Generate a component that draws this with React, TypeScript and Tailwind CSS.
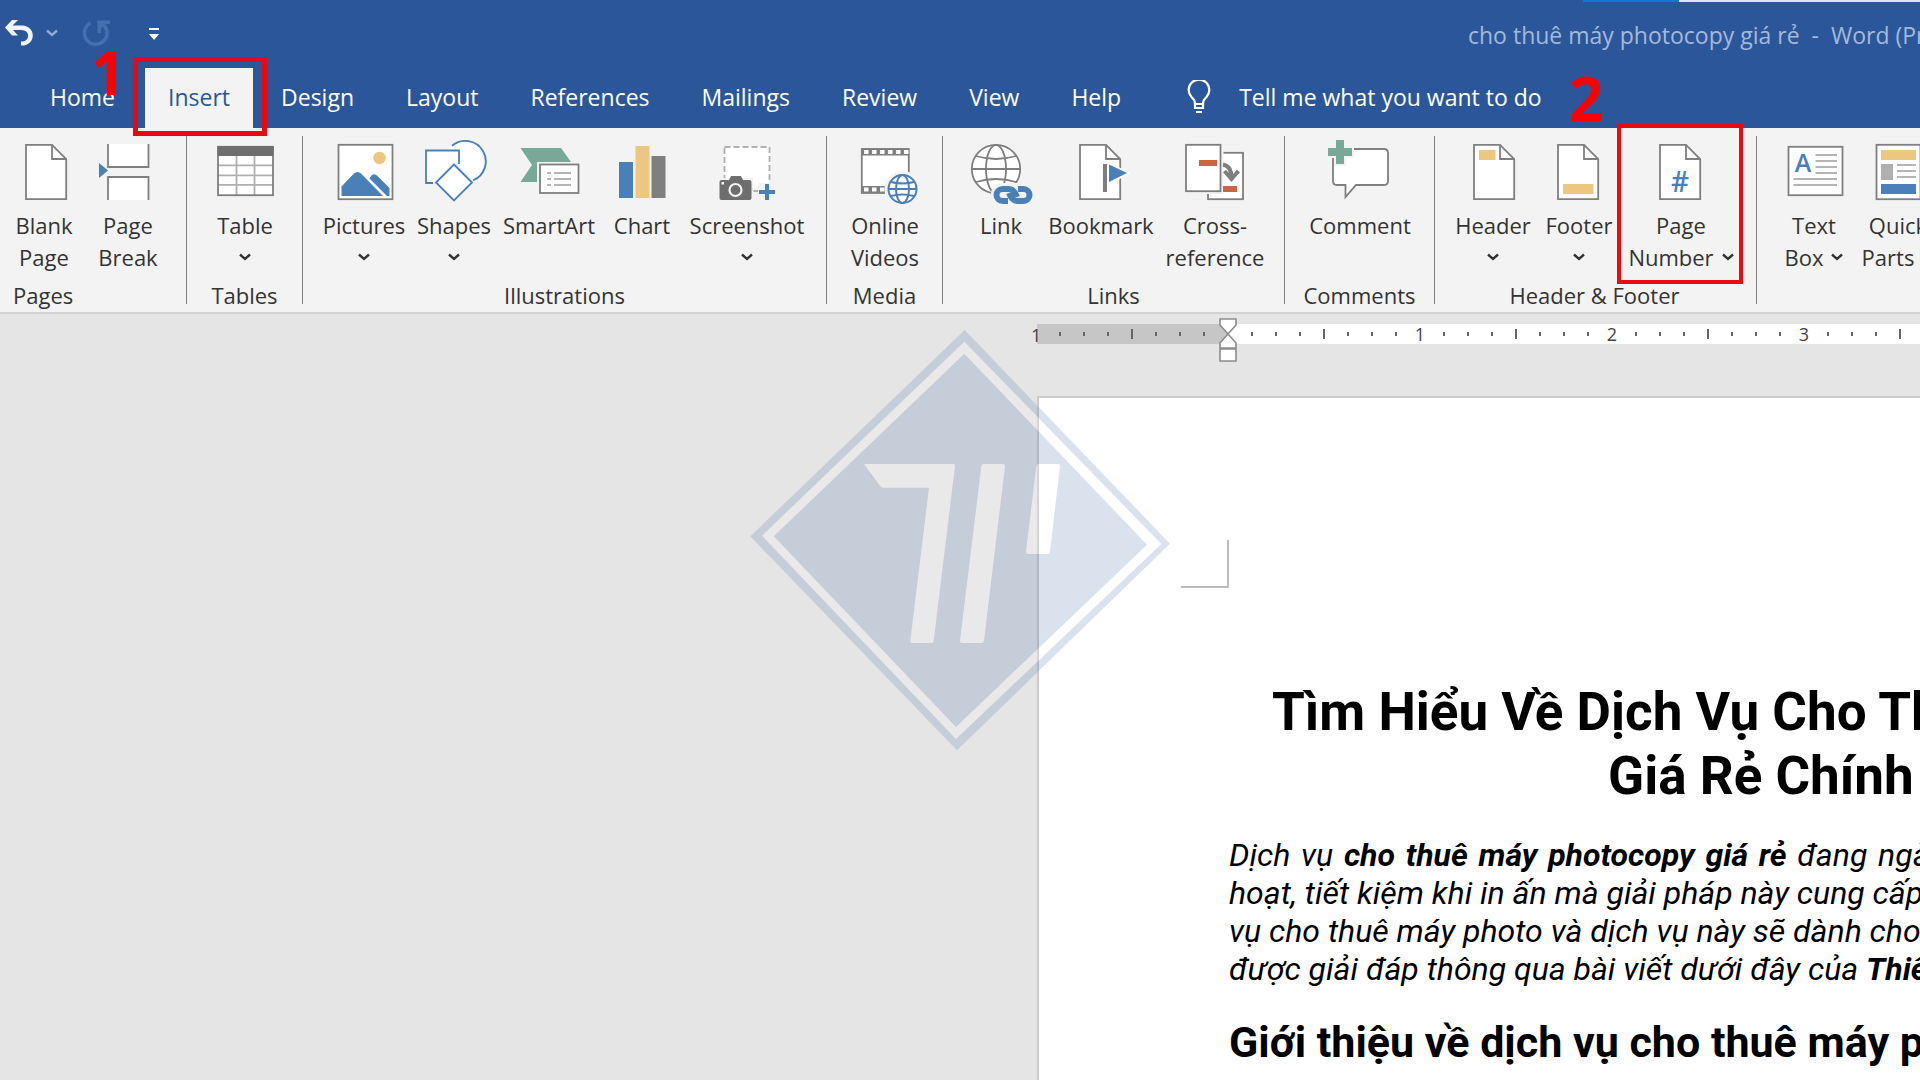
import type { ReactNode } from "react";

interface Tool {
  lines: string[];
  icon: ReactNode;
  width: string;
  menu?: "below" | "inline";
  marked?: boolean;
}

interface Group {
  name: string;
  className: string;
  labelClass?: string;
  tools: Tool[];
}

const GREY = "#7f7f7f";
const BLUE = "#4a80b8";
const GREEN = "#78a897";
const SAND = "#ecc77f";
const RED = "#cf6347";

function Icon({ children }: { children: ReactNode }) {
  return (
    <svg width="72" height="68" viewBox="0 0 72 68" fill="none" aria-hidden="true">
      {children}
    </svg>
  );
}

function Sheet({ x }: { x: number }) {
  return (
    <g transform={`translate(${x} 0)`} stroke={GREY} strokeWidth="1.8">
      <path d="M1 4.8H27L41.2 19V59.2H1Z" fill="#fff" />
      <path d="M27 4.8V19H41.2" />
    </g>
  );
}

const icons = {
  blank: <Icon><Sheet x={17} /></Icon>,
  pageBreak: (
    <Icon>
      <path d="M16 4V27H56.5V4M16 60V37H56.5V60" fill="#fff" stroke={GREY} strokeWidth="1.8" />
      <path d="M7 23L16 30.5L7 38Z" fill={BLUE} />
    </Icon>
  ),
  table: (
    <Icon>
      <rect x="9" y="6.8" width="55" height="48.4" fill="#fff" />
      <path d="M9 25.3H64M9 35.3H64M9 44.8H64M27.5 16V55M45.5 16V55" stroke="#b0b0b0" strokeWidth="1.8" />
      <rect x="9" y="6.8" width="55" height="48.4" stroke={GREY} strokeWidth="1.8" />
      <rect x="8.5" y="6" width="56" height="10" fill="#6e6e6e" />
    </Icon>
  ),
  pictures: (
    <Icon>
      <rect x="10.5" y="4.8" width="54" height="54.4" fill="#fff" stroke={GREY} strokeWidth="1.8" />
      <circle cx="51.5" cy="18" r="6.2" fill={SAND} />
      <path d="M13.5 56V46.5L26 33.5Q29.5 30.5 33 33.5L55 56Z" fill={BLUE} />
      <path d="M41.5 38.5Q45 31.5 49.5 36L61.5 48V56H59Z" fill={BLUE} />
    </Icon>
  ),
  shapes: (
    <Icon>
      <circle cx="45" cy="22.5" r="20.5" fill="#fff" />
      <rect x="8" y="10.5" width="33" height="32.5" fill="#fff" />
      <path d="M34 5.8A20.5 20.5 0 1 1 55 40.4M15 43H8V10.5H41V24" stroke={BLUE} strokeWidth="1.8" />
      <path d="M36 21L57 42.5L36 64L15 42.5Z" fill="#f3f3f3" />
      <path d="M36 24.5L54 42.5L36 60.5L18 42.5Z" fill="#fff" stroke={BLUE} strokeWidth="1.8" />
    </Icon>
  ),
  smartArt: (
    <Icon>
      <path d="M7.5 8H48L58 22H24V42H7.5L19 25Z" fill={GREEN} />
      <rect x="24.5" y="22" width="43" height="33" fill="#f3f3f3" />
      <rect x="27" y="24.5" width="38.5" height="28.5" fill="#fff" stroke={GREY} strokeWidth="1.8" />
      <path d="M34 33H38M34 39H38M34 45H38M41 33H58M41 39H58M41 45H58" stroke="#b5b5b5" strokeWidth="2" />
    </Icon>
  ),
  chart: (
    <Icon>
      <rect x="13" y="22" width="14" height="36" fill={BLUE} />
      <rect x="29.5" y="6" width="14" height="52" fill={SAND} />
      <rect x="45.5" y="16" width="14" height="42" fill="#7f7f7f" />
    </Icon>
  ),
  screenshot: (
    <Icon>
      <rect x="13.5" y="7" width="45" height="44" fill="#fff" stroke="#b0b0b0" strokeWidth="1.8" strokeDasharray="6 3" />
      <rect x="7" y="38" width="35" height="24" fill="#f3f3f3" />
      <path d="M10.5 40H18L20 36H30L32 40H38.5Q40.5 40 40.5 42V58Q40.5 60 38.5 60H10.5Q8.5 60 8.5 58V42Q8.5 40 10.5 40Z" fill="#6e6e6e" />
      <circle cx="24.5" cy="50" r="6" stroke="#f3f3f3" strokeWidth="2.2" />
      <rect x="10.5" y="42" width="2.5" height="2.5" fill="#f3f3f3" />
      <rect x="47" y="43" width="20" height="18" fill="#f3f3f3" />
      <path d="M43 51H47" stroke="#b0b0b0" strokeWidth="1.8" />
      <path d="M56 44V60M48 52H64" stroke={BLUE} strokeWidth="4" />
    </Icon>
  ),
  videos: (
    <Icon>
      <rect x="12.8" y="9" width="47" height="44" fill="#fff" stroke={GREY} strokeWidth="1.8" />
      <path d="M13 12H60M13 49.5H36" stroke={GREY} strokeWidth="7" />
      <path d="M15 12H60M15 49.5H36" stroke="#fff" strokeWidth="4" strokeDasharray="4.5 3.5" />
      <circle cx="53.5" cy="49" r="18" fill="#f3f3f3" />
      <g stroke={BLUE} strokeWidth="2">
        <circle cx="53.5" cy="49" r="14" fill="#fff" />
        <ellipse cx="53.5" cy="49" rx="6.5" ry="14" />
        <path d="M39.5 49H67.5M42 42Q53.5 45 65 42M42 56Q53.5 53 65 56" />
      </g>
    </Icon>
  ),
  link: (
    <Icon>
      <g stroke={GREY} strokeWidth="1.8">
        <circle cx="31" cy="29" r="24.2" fill="#fff" />
        <ellipse cx="31" cy="29" rx="10" ry="24.2" />
        <path d="M7 29H55M11 16Q31 22 51 16M11 42Q31 36 51 42" />
      </g>
      <rect x="26" y="43" width="46" height="23" rx="11" fill="#f3f3f3" />
      <g stroke={BLUE} strokeWidth="6">
        <path d="M43 61H37.5A6 6 0 0 1 37.5 49H44Q49 49 52 57" />
        <path d="M53 49H58.5A6 6 0 0 1 58.5 61H52Q47 61 44 53" />
      </g>
    </Icon>
  ),
  bookmark: (
    <Icon>
      <Sheet x={14} />
      <path d="M43 22L66 33L43 45Z" fill="#fff" />
      <rect x="38" y="24" width="4" height="28" fill={GREY} />
      <path d="M44 24.5L62 33L44 42Z" fill={BLUE} />
    </Icon>
  ),
  crossReference: (
    <Icon>
      <rect x="29" y="12.8" width="35" height="46.4" fill="#fff" stroke={GREY} strokeWidth="1.8" />
      <rect x="5" y="3" width="39.5" height="51" fill="#f3f3f3" />
      <rect x="7" y="4.8" width="34.5" height="46.4" fill="#fff" stroke={GREY} strokeWidth="1.8" />
      <path d="M20 23H38M44 49H58" stroke={RED} strokeWidth="6" />
      <path d="M44 24.5Q52.5 26 52.5 38M45.5 31L52.5 39L59.5 31" stroke={GREY} strokeWidth="4" />
    </Icon>
  ),
  comment: (
    <Icon>
      <path d="M13 9H60Q64 9 64 13V41Q64 45 60 45H32L21.5 57V45H13Q9 45 9 41V13Q9 9 13 9Z" fill="#fff" stroke={GREY} strokeWidth="1.8" />
      <path d="M16 -2V26M2 12H30" stroke="#f3f3f3" strokeWidth="12" />
      <path d="M16 0V24M4 12H28" stroke={GREEN} strokeWidth="8" />
    </Icon>
  ),
  header: (
    <Icon>
      <Sheet x={16} />
      <rect x="22" y="10" width="16.5" height="10" fill={SAND} />
    </Icon>
  ),
  footer: (
    <Icon>
      <Sheet x={14} />
      <rect x="20" y="44" width="30.5" height="10" fill={SAND} />
    </Icon>
  ),
  pageNumber: (
    <Icon>
      <Sheet x={14} />
      <text x="35" y="52" textAnchor="middle" fontSize="28" fontWeight="600" fill={BLUE}>#</text>
    </Icon>
  ),
  textBox: (
    <Icon>
      <rect x="10.5" y="6.8" width="54" height="48.4" fill="#fff" stroke={GREY} strokeWidth="1.8" />
      <text x="25" y="32" textAnchor="middle" fontSize="25" fontWeight="600" fill={BLUE}>A</text>
      <path d="M37.5 15H59M37.5 21H59M37.5 27H59M37.5 33H59M15.5 39H59M15.5 45H59" stroke="#b5b5b5" strokeWidth="2" />
    </Icon>
  ),
  quickParts: (
    <Icon>
      <rect x="14.5" y="4.8" width="44" height="54.4" fill="#fff" stroke={GREY} strokeWidth="1.8" />
      <rect x="19" y="10" width="35" height="10" fill={SAND} />
      <rect x="19" y="24" width="12" height="16" fill="#b0b0b0" />
      <path d="M35 25H54M35 31H54M35 37H54" stroke="#b5b5b5" strokeWidth="2" />
      <rect x="19" y="44" width="35" height="10" fill={BLUE} />
    </Icon>
  ),
};

const groups: Group[] = [
  {
    name: "Pages",
    className: "w-[187px] pl-0.5",
    labelClass: "pl-[11px] text-left",
    tools: [
      { lines: ["Blank", "Page"], icon: icons.blank, width: "w-[84px]" },
      { lines: ["Page", "Break"], icon: icons.pageBreak, width: "w-[84px]" },
    ],
  },
  {
    name: "Tables",
    className: "w-[116px]",
    tools: [{ lines: ["Table"], icon: icons.table, width: "w-[116px]", menu: "below" }],
  },
  {
    name: "Illustrations",
    className: "w-[524px] px-4",
    tools: [
      { lines: ["Pictures"], icon: icons.pictures, width: "w-[90px]", menu: "below" },
      { lines: ["Shapes"], icon: icons.shapes, width: "w-[90px]", menu: "below" },
      { lines: ["SmartArt"], icon: icons.smartArt, width: "w-[100px]" },
      { lines: ["Chart"], icon: icons.chart, width: "w-[86px]" },
      { lines: ["Screenshot"], icon: icons.screenshot, width: "w-[124px]", menu: "below" },
    ],
  },
  {
    name: "Media",
    className: "w-[116px]",
    tools: [{ lines: ["Online", "Videos"], icon: icons.videos, width: "w-[116px]" }],
  },
  {
    name: "Links",
    className: "w-[342px] px-[18px]",
    tools: [
      { lines: ["Link"], icon: icons.link, width: "w-[80px]" },
      { lines: ["Bookmark"], icon: icons.bookmark, width: "w-[120px]" },
      { lines: ["Cross-", "reference"], icon: icons.crossReference, width: "w-[108px]" },
    ],
  },
  {
    name: "Comments",
    className: "w-[150px]",
    tools: [{ lines: ["Comment"], icon: icons.comment, width: "w-[150px]" }],
  },
  {
    name: "Header & Footer",
    className: "w-[322px] pl-3.5 pr-4",
    tools: [
      { lines: ["Header"], icon: icons.header, width: "w-[88px]", menu: "below" },
      { lines: ["Footer"], icon: icons.footer, width: "w-[84px]", menu: "below" },
      { lines: ["Page", "Number"], icon: icons.pageNumber, width: "w-[120px]", menu: "inline", marked: true },
    ],
  },
  {
    name: "",
    className: "w-[322px] pl-3.5",
    tools: [
      { lines: ["Text", "Box"], icon: icons.textBox, width: "w-[86px]", menu: "inline" },
      { lines: ["Quick", "Parts"], icon: icons.quickParts, width: "w-[82px]", menu: "inline" },
    ],
  },
];

const tabs = ["Home", "Insert", "Design", "Layout", "References", "Mailings", "Review", "View", "Help"];

function Chevron() {
  return (
    <svg width="12" height="8" viewBox="0 0 12 8" fill="none" aria-hidden="true">
      <path d="M1 1.5L6 6L11 1.5" stroke="currentColor" strokeWidth="2.4" />
    </svg>
  );
}

function TitleBar() {
  return (
    <div className="relative flex h-[68px] items-start pt-[18px]">
      <div className="absolute top-0 right-0 left-[1583px] flex h-0.5">
        <div className="w-24 bg-[#0f78d4]" />
        <div className="flex-1 bg-[#dfe6f1]" />
      </div>
      <button type="button" aria-label="Undo" className="ml-1 text-[#f0f4fa]">
        <svg width="30" height="30" viewBox="0 0 30 30" fill="none">
          <path d="M1 9.5L8 2H14L8.5 7.5H18C33 8 32 28 17 27.5V23.5C26 24 27 12 17 12H9L14 17.5H8Z" fill="currentColor" />
        </svg>
      </button>
      <button type="button" aria-label="Undo history" className="mt-[11px] ml-3 text-[#8fa9d0]"><Chevron /></button>
      <button type="button" aria-label="Repeat" className="ml-[23px] text-[#4470ae]">
        <svg width="30" height="30" viewBox="0 0 30 30" fill="none">
          <path d="M9.5 5A11.3 11.3 0 1 0 21.500 6" stroke="currentColor" strokeWidth="3.5" />
          <path d="M16.500 2.500H29V6H24.500L20 10.500V15H16.500Z" fill="currentColor" />
        </svg>
      </button>
      <button type="button" aria-label="Customize Quick Access Toolbar" className="mt-2.5 ml-[37px] text-white">
        <svg width="12" height="14" viewBox="0 0 12 14" fill="currentColor">
          <path d="M1 0H11V2H1ZM1 6H11L6 12Z" />
        </svg>
      </button>
      <p className="absolute top-[19px] left-[1468px] text-[23px] leading-8 whitespace-pre text-[#a3b9da]">
        {"cho thuê máy photocopy giá rẻ  -  Word (Product Activation Failed)"}
      </p>
    </div>
  );
}

function TabStrip() {
  return (
    <div className="flex h-[60px] pl-6 text-[23px] leading-[58px] text-white">
      {tabs.map((tab) =>
        tab === "Insert" ? (
          <div key={tab} className="relative pr-0.5 pl-1">
            <button type="button" className="h-[60px] bg-[#f3f3f3] px-[23px] pb-0.5 text-[#2b579a]">{tab}</button>
            <span className="pointer-events-none absolute -top-[11px] -right-3 -bottom-2 -left-2 z-10 border-5 border-[#ea0a0d]" />
            <span className="pointer-events-none absolute -top-9 -left-[50px] z-10 text-[60px] leading-[80px] font-bold text-[#ff0000]">1</span>
          </div>
        ) : (
          <button key={tab} type="button" className="px-[26px] pb-0.5">{tab}</button>
        )
      )}
      <button type="button" className="ml-10 flex items-center gap-7 pb-0.5">
        <svg width="24" height="34" viewBox="0 0 24 34" fill="none" aria-hidden="true">
          <path d="M8 24Q8 20 4.5 17A10.3 10.3 0 1 1 19.5 17Q16 20 16 24V28H8ZM8 24H16M9 32H15" stroke="currentColor" strokeWidth="2.2" />
        </svg>
        Tell me what you want to do
      </button>
    </div>
  );
}

function ToolButton({ tool }: { tool: Tool }) {
  return (
    <button type="button" className={`relative flex shrink-0 flex-col items-center ${tool.width}`}>
      <span className="h-[69px] w-[72px]">{tool.icon}</span>
      {tool.lines.map((line, i) => (
        <span key={line} className="flex items-center gap-2 whitespace-nowrap">
          {line}
          {tool.menu === "inline" && i === tool.lines.length - 1 && <Chevron />}
        </span>
      ))}
      {tool.menu === "below" && <span className="flex h-8 items-center"><Chevron /></span>}
      {tool.marked && (
        <>
          <span className="pointer-events-none absolute -top-4 -right-0.5 -bottom-[11px] -left-1 border-4 border-[#ea0a0d]" />
          <span className="pointer-events-none absolute -top-[82px] -left-[52px] text-[60px] leading-[80px] font-bold text-[#ff0000]">2</span>
        </>
      )}
    </button>
  );
}

function Ribbon() {
  return (
    <div className="flex h-[186px] border-b-2 border-[#d2d2d2] bg-[#f3f3f3] pt-2 text-[22px] leading-8 text-[#333]">
      {groups.map((group, i) => (
        <section
          key={group.name || i}
          className={`flex h-[168px] shrink-0 flex-col justify-between border-r border-[#808080] pt-1 ${group.className}`}
        >
          <div className="flex items-start">
            {group.tools.map((tool) => <ToolButton key={tool.lines.join(" ")} tool={tool} />)}
          </div>
          <p className={`leading-[18px] ${group.labelClass ?? "text-center"}`}>{group.name}</p>
        </section>
      ))}
    </div>
  );
}

function Marks({ count }: { count: number }) {
  return (
    <>
      {Array.from({ length: count }, (_, i) => i + 1).map((n) => (
        <span key={n} className="flex w-6 shrink-0 items-center justify-center">
          {n % 8 === 0 ? n / 8 : n % 4 === 0
            ? <span className="h-2.5 w-0.5 bg-[#666]" />
            : <span className="h-1 w-0.5 bg-[#666]" />}
        </span>
      ))}
    </>
  );
}

function Ruler() {
  return (
    <div className="flex pt-2.5 pl-[1037px] text-[18px] leading-[22px] text-[#444]">
      <div className="relative flex h-5 w-[191px] shrink-0 bg-[#c6c6c6] pl-[11px]">
        <span className="absolute top-0 -left-1.5">1</span>
        <Marks count={7} />
        <svg className="absolute -top-1.5 -right-[9px] z-10" width="18" height="44" viewBox="0 0 18 44" fill="#fff" stroke="#8c8c8c" strokeWidth="1.6" aria-hidden="true">
          <path d="M1 1H17V7L9 16L17 25V30H1V25L9 16L1 7Z" />
          <path d="M1 31H17V43H1Z" />
        </svg>
      </div>
      <div className="flex h-5 min-w-0 flex-1 overflow-hidden bg-white pl-3">
        <Marks count={32} />
      </div>
    </div>
  );
}

function Page() {
  return (
    <main className="mt-[52px] ml-[1037px] min-h-0 flex-1 overflow-hidden border-t-2 border-l-2 border-[#cbcbcb] bg-white pl-[142px] whitespace-nowrap text-black">
      <div className="mt-[142px] h-12 w-12 border-r-2 border-b-2 border-[#bdbdbd]" />
      <article className="pl-12 font-[Roboto,sans-serif]">
        <h1 className="mt-[92px] text-[53px] leading-[64px] font-bold">
          <span className="block pl-[43px]">Tìm Hiểu Về Dịch Vụ Cho Thuê Máy</span>
          <span className="block pl-[379px]">Giá Rẻ Chính Hãng</span>
        </h1>
        <div className="mt-7 text-[32px] leading-[38px] italic">
          <p className="w-[715px] [text-align-last:justify]">
            Dịch vụ <b>cho thuê máy photocopy giá rẻ</b> đang ngày
          </p>
          <p>hoạt, tiết kiệm khi in ấn mà giải pháp này cung cấp</p>
          <p>vụ cho thuê máy photo và dịch vụ này sẽ dành cho</p>
          <p>được giải đáp thông qua bài viết dưới đây của <b>Thiên</b></p>
        </div>
        <h2 className="mt-7 text-[43px] leading-[52px] font-bold">Giới thiệu về dịch vụ cho thuê máy photocopy</h2>
      </article>
    </main>
  );
}

function Watermark() {
  return (
    <svg className="pointer-events-none absolute top-[320px] left-[740px] opacity-[0.19]" width="500" height="440" viewBox="0 0 1500 1320" aria-hidden="true">
      <path d="M674 30L1290 671L651 1291L31 649Z" fill="#416ca5" />
      <path d="M673 65L1264 672L648 1257L66 647Z" fill="#fff" />
      <path d="M673 101L1221 674L648 1221L101 649Z" fill="#416ca5" />
      <g fill="#fff">
        <path d="M372 432H640Q645 432 645 438L581 962Q580 969 574 969H516Q510 969 511 962L567 503H430Q424 503 420 497Z" />
        <path d="M732 432H789Q796 432 795 439L732 962Q731 969 724 969H666Q659 969 660 962L724 439Q725 432 732 432Z" />
        <path d="M896 432H954Q961 432 960 439L930 695Q929 702 922 702H864Q857 702 858 695L889 439Q890 432 896 432Z" />
      </g>
    </svg>
  );
}

export default function App() {
  return (
    <div className="relative flex h-screen flex-col overflow-hidden bg-[#e5e5e5] font-['Open_Sans','Noto_Sans',sans-serif]">
      <header className="shrink-0 bg-[#2b579a]">
        <TitleBar />
        <TabStrip />
        <Ribbon />
      </header>
      <Ruler />
      <Page />
      <Watermark />
    </div>
  );
}
